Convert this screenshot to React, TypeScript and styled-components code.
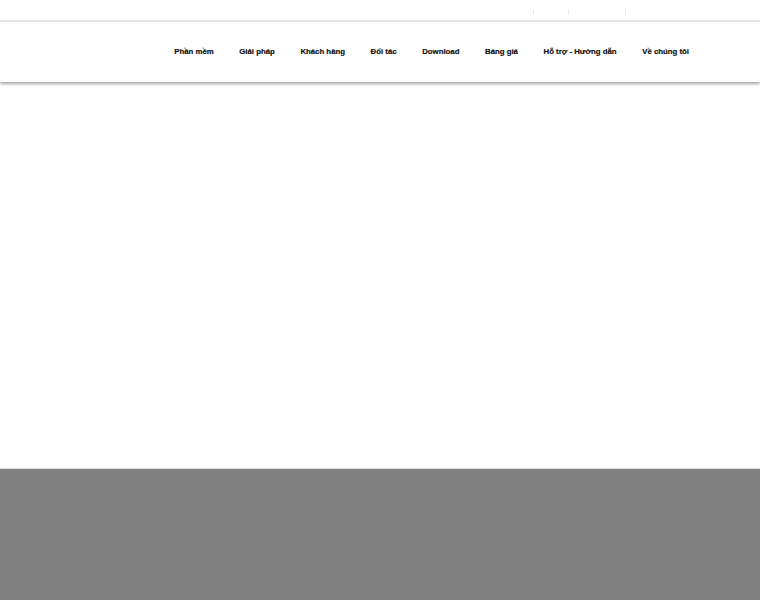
import React from "react";
import styled, { createGlobalStyle } from "styled-components";

const Global = createGlobalStyle`
  html, body { margin: 0; padding: 0; background: #ffffff; }
  body { font-family: "Liberation Sans", Arial, sans-serif; }
  * { box-sizing: border-box; }
`;

const Page = styled.div`
  display: flex;
  flex-direction: column;
  width: 760px;
  height: 600px;
  overflow: hidden;
`;

const TopBar = styled.div`
  height: 20px;
  display: flex;
  justify-content: flex-end;
  align-items: center;
  padding-right: 134px;
  padding-top: 4px;
  background: #ffffff;
`;

const TopItem = styled.span<{ $w: number }>`
  width: ${(p) => p.$w}px;
  height: 6px;
  border-left: 1px solid #ececec;
`;

const HeaderBar = styled.header`
  position: relative;
  z-index: 2;
  height: 62px;
  display: flex;
  align-items: center;
  justify-content: flex-end;
  padding-right: 71px;
  background: #ffffff;
  border-top: 2px solid #e6e6e6;
  box-shadow: 0 2px 3px rgba(0, 0, 0, 0.35);
`;

const Nav = styled.nav`
  display: flex;
  align-items: center;
  gap: 25.6px;
  margin-top: -1px;
`;

const NavLink = styled.a`
  font-family: "Liberation Sans", Arial, sans-serif;
  font-weight: 700;
  font-size: 7.8px;
  color: #111111;
  text-decoration: none;
  white-space: nowrap;
  -webkit-text-stroke: 0.2px #111111;
`;

const Content = styled.main`
  flex: 0 0 387px;
  background: #ffffff;
  border-bottom: 1px solid #dcdcdc;
`;

const Footer = styled.footer`
  flex: 1;
  background: #808080;
`;

const items = [
  "Phần mềm",
  "Giải pháp",
  "Khách hàng",
  "Đối tác",
  "Download",
  "Báng giá",
  "Hỗ trợ - Hướng dẫn",
  "Về chúng tôi",
];

export default function App() {
  return (
    <>
      <Global />
      <Page>
        <TopBar>
          <TopItem $w={35} />
          <TopItem $w={57} />
          <TopItem $w={0} />
        </TopBar>
        <HeaderBar>
          <Nav>
            {items.map((t) => (
              <NavLink key={t} href="#">
                {t}
              </NavLink>
            ))}
          </Nav>
        </HeaderBar>
        <Content />
        <Footer />
      </Page>
    </>
  );
}
